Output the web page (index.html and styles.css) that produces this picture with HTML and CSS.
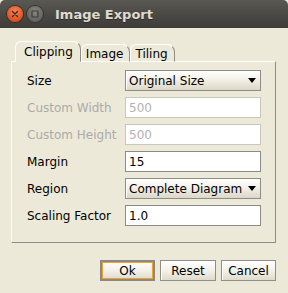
FILE: index.html
```html
<!DOCTYPE html>
<html>
<head>
<meta charset="utf-8">
<link rel="stylesheet" href="styles.css">
</head>
<body>
<div class="window">
  <div class="titlebar">
    <div class="wbtn close">
      <svg width="16" height="16" viewBox="0 0 16 16"><path d="M5.5 5.5 L10.5 10.5 M10.5 5.5 L5.5 10.5" stroke="#3a2a22" stroke-width="1.4" stroke-linecap="round"/></svg>
    </div>
    <div class="wbtn maxi">
      <svg width="16" height="16" viewBox="0 0 16 16"><rect x="5" y="5" width="6" height="6" fill="none" stroke="#3c3b37" stroke-width="1.2" rx="0.5"/></svg>
    </div>
    <div class="title">Image Export</div>
  </div>
  <div class="content">
    <div class="tabs">
      <div class="tab active">Clipping</div>
      <div class="tab">Image</div>
      <div class="tab">Tiling</div>
    </div>
    <div class="panel">
      <div class="form">
        <div class="label">Size</div>
        <div class="combo"><span>Original Size</span><span class="arrow"></span></div>
        <div class="label disabled">Custom Width</div>
        <div class="field disabled">500</div>
        <div class="label disabled">Custom Height</div>
        <div class="field disabled">500</div>
        <div class="label">Margin</div>
        <div class="field">15</div>
        <div class="label">Region</div>
        <div class="combo"><span>Complete Diagram</span><span class="arrow"></span></div>
        <div class="label">Scaling Factor</div>
        <div class="field">1.0</div>
      </div>
    </div>
    <div class="buttons">
      <div class="btn default"><span>Ok</span></div>
      <div class="btn reset">Reset</div>
      <div class="btn cancel">Cancel</div>
    </div>
  </div>
</div>
</body>
</html>
```

FILE: styles.css
```css
html, body {
  margin: 0;
  padding: 0;
  background: #ece9d8;
}
.window {
  width: 288px;
  height: 293px;
  background: #ece9d8;
  font-family: "DejaVu Sans", sans-serif;
  font-size: 12px;
  color: #000;
  overflow: hidden;
}
.titlebar {
  height: 28px;
  box-sizing: border-box;
  background: linear-gradient(#5a5852, #3c3b37);
  border-radius: 5px 5px 0 0;
  display: flex;
  align-items: center;
  padding-left: 7px;
}
.wbtn {
  width: 16px;
  height: 16px;
  border-radius: 50%;
  display: flex;
}
.close {
  background: radial-gradient(circle at 50% 35%, #f4855a, #e0501c 70%, #c8431a);
  box-shadow: 0 0 0 1px #3a2f28;
}
.maxi {
  margin-left: 4px;
  background: radial-gradient(circle at 50% 35%, #8a8883, #63625d 70%);
  box-shadow: 0 0 0 1px #34332f;
}
.title {
  margin-left: 12px;
  font-weight: bold;
  font-size: 13px;
  color: #dfdbd2;
  text-shadow: 0 1px 0 #2c2b28;
  margin-top: 1px;
}
.content {
  padding: 13px 12px 0 11px;
}
.tabs {
  display: flex;
  align-items: flex-end;
  padding-left: 4px;
  height: 21px;
  margin-bottom: -1px;
  position: relative;
  z-index: 1;
}
.tab {
  height: 18px;
  box-sizing: border-box;
  padding: 2px 6px 0 4px;
  border-top: 1px solid #ffffff;
  border-left: 1px solid #ffffff;
  border-right: 1px solid #8e8c84;
  border-radius: 6px 8px 0 0;
  line-height: 15px;
  background: #ece9d8;
  border-bottom: 1px solid #ffffff;
}
.tab.active {
  height: 21px;
  padding: 3px 7px 0 8px;
  border-bottom: 1px solid #ece9d8;
}
.panel {
  border-top: 1px solid #ffffff;
  border-left: 1px solid #ffffff;
  border-right: 1px solid #8e8c84;
  border-bottom: 1px solid #8e8c84;
  height: 182px;
  box-sizing: border-box;
}
.form {
  display: grid;
  grid-template-columns: 98px 136px;
  grid-auto-rows: 21px;
  row-gap: 6px;
  padding: 8px 0 0 15px;
}
.label {
  display: flex;
  align-items: center;
  padding-top: 1px;
}
.label.disabled {
  color: #ababab;
}
.field {
  background: #fff;
  border: 1px solid #8a8a86;
  box-sizing: border-box;
  padding: 1px 3px 0;
  display: flex;
  align-items: center;
}
.field.disabled {
  border-color: #c9c6bb;
  color: #b3b3b3;
}
.combo {
  border: 1px solid #8e8d88;
  box-sizing: border-box;
  background: linear-gradient(#ffffff, #f4f2ea 40%, #dcd8c8);
  display: flex;
  align-items: center;
  justify-content: space-between;
  padding: 1px 4px 0 3px;
  box-shadow: inset 1px 1px 0 #ffffff;
}
.arrow {
  width: 0;
  height: 0;
  border-left: 4px solid transparent;
  border-right: 4px solid transparent;
  border-top: 5px solid #000;
  margin-top: -1px;
}
.buttons {
  display: flex;
  justify-content: flex-end;
  gap: 5px;
  margin-top: 17px;
  margin-right: 0;
}
.btn {
  height: 21px;
  box-sizing: border-box;
  border: 1px solid #8f8e89;
  background: linear-gradient(#ffffff, #f3f1ea 50%, #dedbcc);
  box-shadow: inset 1px 1px 0 #fff;
  display: flex;
  align-items: center;
  justify-content: center;
  padding-top: 1px;
}
.btn.default {
  width: 55px;
  border: 2px solid #8a8985;
  box-shadow: inset 0 0 0 1px #f2a22b;
}
.btn.reset {
  width: 56px;
}
.btn.cancel {
  width: 55px;
}
```
